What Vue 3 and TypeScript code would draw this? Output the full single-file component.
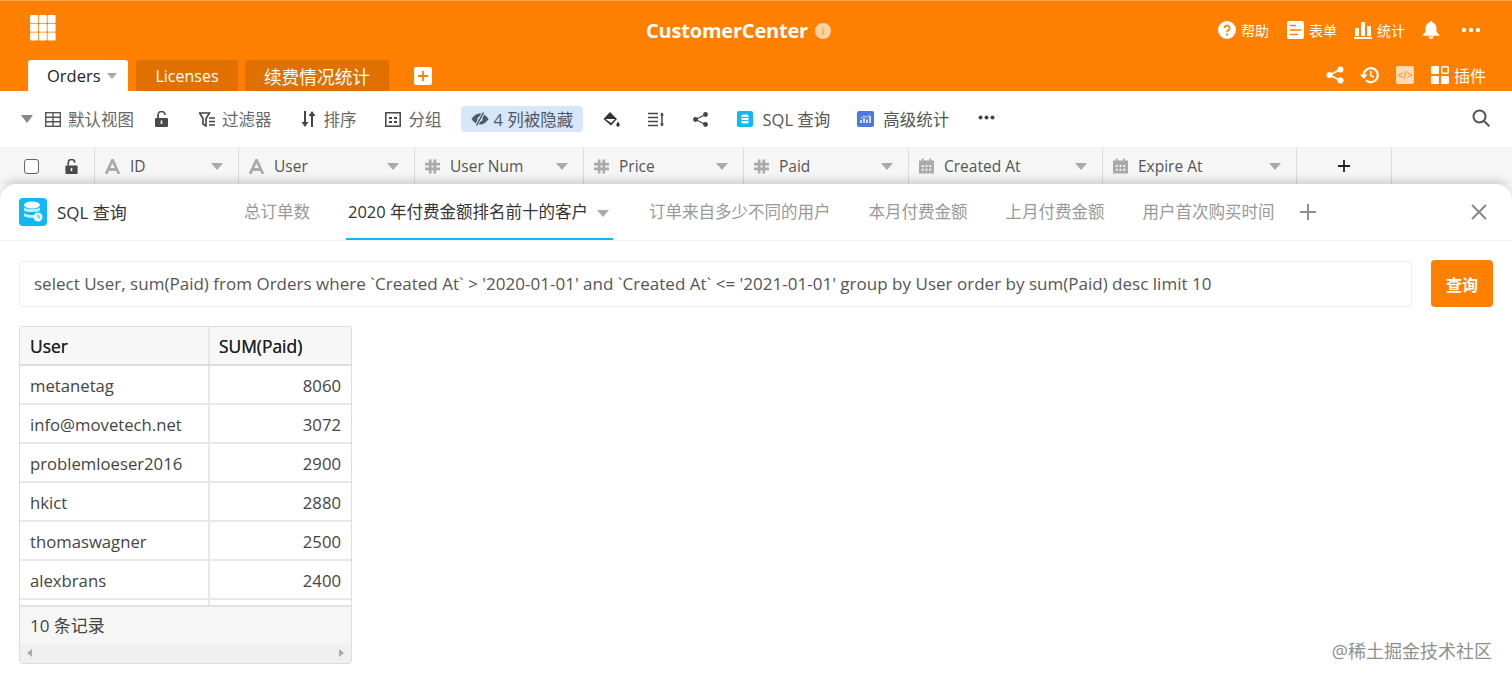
<script setup lang="ts">
interface Column {
  name: string;
  width: number;
  icon: 'text' | 'num' | 'date';
}

const columns: Column[] = [
  { name: 'ID', width: 144, icon: 'text' },
  { name: 'User', width: 176, icon: 'text' },
  { name: 'User Num', width: 169, icon: 'num' },
  { name: 'Price', width: 160, icon: 'num' },
  { name: 'Paid', width: 165, icon: 'num' },
  { name: 'Created At', width: 194, icon: 'date' },
  { name: 'Expire At', width: 194, icon: 'date' },
];

const panelTabs = ['订单来自多少不同的用户', '本月付费金额', '上月付费金额', '用户首次购买时间'];

const rows: [string, number][] = [
  ['metanetag', 8060],
  ['info@movetech.net', 3072],
  ['problemloeser2016', 2900],
  ['hkict', 2880],
  ['thomaswagner', 2500],
  ['alexbrans', 2400],
];

const query =
  "select User, sum(Paid) from Orders where `Created At` > '2020-01-01' and `Created At` <= '2021-01-01' group by User order by sum(Paid) desc limit 10";
</script>

<template>
  <div class="page">
    <header class="top">
      <div class="top-row">
        <svg class="apps" width="26" height="26" viewBox="0 0 26 26" fill="#fff">
          <rect v-for="n in 9" :key="n" :x="((n - 1) % 3) * 8.8" :y="Math.floor((n - 1) / 3) * 8.8" width="8" height="8" rx="1" />
        </svg>
        <div class="title">
          <span>CustomerCenter</span>
          <span class="info">i</span>
        </div>
        <div class="top-actions">
          <span class="top-act help">
            <svg width="18" height="18" viewBox="0 0 18 18"><circle cx="9" cy="9" r="9" fill="#fff" /><path d="M6.4 7a2.6 2.6 0 1 1 4 2.2c-.9.6-1.4 1-1.4 2" fill="none" stroke="#ff8000" stroke-width="1.7" /><circle cx="9" cy="13.6" r="1.1" fill="#ff8000" /></svg>
            帮助
          </span>
          <span class="top-act form">
            <svg width="17" height="18" viewBox="0 0 17 18"><rect width="17" height="18" rx="2" fill="#fff" /><path d="M3 4.5h6M3 9h11M3 13.5h8" stroke="#ff8000" stroke-width="1.6" /></svg>
            表单
          </span>
          <span class="top-act stats">
            <svg width="18" height="18" viewBox="0 0 18 18" fill="#fff"><rect x="1" y="7" width="4" height="8" /><rect x="7" y="1" width="4" height="14" /><rect x="13" y="5" width="4" height="10" /><rect y="16" width="18" height="2" /></svg>
            统计
          </span>
          <svg class="bell" width="18" height="18" viewBox="0 0 18 18" fill="#fff"><path d="M9 0a1.4 1.4 0 0 1 1.4 1.5C13 2.2 14.5 4.5 14.5 7.5V11l2.8 2.800v.9H.7v-.9L3.500 11V7.500C3.500 4.500 5 2.200 7.600 1.500A1.400 1.400 0 0 1 9 0zM6.500 15.500h5a2.500 2.500 0 0 1-5 0z" /></svg>
          <svg class="dots" width="20" height="6" viewBox="0 0 20 6" fill="#fff"><circle cx="3" cy="3" r="2.2" /><circle cx="10" cy="3" r="2.2" /><circle cx="17" cy="3" r="2.2" /></svg>
        </div>
      </div>
      <div class="tab-row">
        <div class="tab active">Orders <i class="caret grey"></i></div>
        <div class="tab licenses">Licenses</div>
        <div class="tab renew">续费情况统计</div>
        <span class="tab-add">
          <svg width="18" height="18" viewBox="0 0 18 18"><rect width="18" height="18" rx="2" fill="#fff" /><path d="M9 4v10M4 9h10" stroke="#ff8000" stroke-width="1.8" /></svg>
        </span>
        <div class="tab-tools">
          <svg class="t-share" width="18" height="18" viewBox="0 0 18 18" fill="#fff"><circle cx="3.5" cy="9" r="3" /><circle cx="14.500" cy="3.500" r="3" /><circle cx="14.500" cy="14.500" r="3" /><path d="M3.500 9l11-5.500M3.500 9l11 5.500" stroke="#fff" stroke-width="1.4" /></svg>
          <svg class="hist" width="20" height="18" viewBox="0 0 20 18"><path d="M3.800 9a7 7 0 1 1 2.200 5.200" fill="none" stroke="#fff" stroke-width="2.2" /><path d="M0 8.500h7.500L3.800 13z" fill="#fff" /><path d="M10.800 5v4.500l3 1.800" fill="none" stroke="#fff" stroke-width="1.8" /></svg>
          <span class="code">&lt;/&gt;</span>
          <span class="plugin">
            <svg width="18" height="18" viewBox="0 0 18 18" fill="#fff"><rect width="8" height="8" rx="1" /><rect x="10.750" y=".75" width="6.500" height="6.500" rx="1" fill="none" stroke="#fff" stroke-width="1.5" /><rect y="10" width="8" height="8" rx="1" /><rect x="10" y="10" width="8" height="8" rx="1" /></svg>
            插件
          </span>
        </div>
      </div>
    </header>

    <div class="toolbar">
      <i class="caret big"></i>
      <span class="tool view">
        <svg width="16" height="15" viewBox="0 0 16 15" fill="none" stroke="#555" stroke-width="1.4"><rect x=".7" y=".7" width="14.600" height="13.600" /><path d="M.7 5.300h14.600M.7 9.800h14.600M8 .7v13.600" /></svg>
        默认视图
      </span>
      <svg class="lock" width="13" height="16" viewBox="0 0 13 16"><path d="M3 7V4a3.500 3.500 0 0 1 7 0" fill="none" stroke="#4a4a4a" stroke-width="1.7" /><rect y="7" width="13" height="9" rx="1" fill="#4a4a4a" /><rect x="5.700" y="9.500" width="1.600" height="3.500" fill="#fff" /></svg>
      <span class="tool filter">
        <svg width="17" height="15" viewBox="0 0 17 15"><path d="M.5 1h10L7 6.500V14L4 12V6.500z" fill="none" stroke="#444" stroke-width="1.6" /><path d="M10 6h6M10 9.500h6M10 13h6" stroke="#444" stroke-width="1.6" /></svg>
        过滤器
      </span>
      <span class="tool sort">
        <svg width="15" height="16" viewBox="0 0 15 16" fill="#444"><path d="M3 0h2v11h2.500L4 16 .5 11H3zM10 16h2V5h2.500L11 0 7.500 5H10z" /></svg>
        排序
      </span>
      <span class="tool group">
        <svg width="16" height="15" viewBox="0 0 16 15"><rect x=".8" y=".8" width="14.400" height="13.400" fill="none" stroke="#444" stroke-width="1.5" /><path d="M4 5h3v2H4zM9 5h3v2H9zM4 9h3v2H4zM9 9h3v2H9z" fill="#444" /></svg>
        分组
      </span>
      <span class="pill">
        <svg width="18" height="14" viewBox="0 0 18 14"><path d="M.5 7C2.500 3.500 5.500 1.500 9 1.500s6.500 2 8.500 5.500c-2 3.500-5 5.500-8.500 5.500S2.500 10.500.5 7z" fill="#4a5a70" /><circle cx="9" cy="7" r="2.500" fill="#d8e6fa" /><path d="M13 0L5 14" stroke="#d8e6fa" stroke-width="3.2" /><path d="M12.500 .5L5.500 13.500" stroke="#4a5a70" stroke-width="1.5" /></svg>
        4 列被隐藏
      </span>
      <svg class="paint" width="18" height="17" viewBox="0 0 18 17" fill="#333"><path d="M8 1l7 7-6 6.500L1.500 8z" /><path d="M3.500 8h9.500L9 12z" fill="#fff" /><path d="M16 10.500c1 1.500 1.700 2.500 1.700 3.500a1.700 1.700 0 0 1-3.400 0c0-1 .7-2 1.700-3.500z" /></svg>
      <svg class="height" width="16" height="15" viewBox="0 0 16 15" stroke="#444" stroke-width="1.5"><path d="M0 1.500h10M0 5.500h10M0 9.500h10M0 13.500h10M14 1v13" /><path d="M12 3.500L14 .5l2 3zM12 11.500l2 3 2-3z" fill="#444" stroke="none" /></svg>
      <svg class="share" width="15" height="15" viewBox="0 0 15 15" fill="#444"><circle cx="2.500" cy="7.500" r="2.400" /><circle cx="12.500" cy="2.500" r="2.400" /><circle cx="12.500" cy="12.500" r="2.400" /><path d="M2.500 7.500l10-5M2.500 7.500l10 5" stroke="#444" stroke-width="1.2" /></svg>
      <span class="tool sql">
        <svg width="16" height="16" viewBox="0 0 16 16"><rect width="16" height="16" rx="2" fill="#11b8f5" /><rect x="4.500" y="3.500" width="7" height="9" rx="1.500" fill="#fff" /><path d="M4.500 6.500h7M4.500 9.500h7" stroke="#11b8f5" /></svg>
        SQL 查询
      </span>
      <span class="tool adv">
        <svg width="17" height="16" viewBox="0 0 17 16"><rect width="17" height="16" rx="2" fill="#4d77e0" /><path d="M4 12V9M7 12V7M10 12V8.500M13 12V5" stroke="#fff" stroke-width="1.5" /><path d="M3.500 7.500L7 5l3 1.500L13 3.500" stroke="#fff" fill="none" stroke-width=".8" /></svg>
        高级统计
      </span>
      <svg class="more" width="17" height="5" viewBox="0 0 17 5" fill="#444"><circle cx="2.500" cy="2.500" r="2" /><circle cx="8.500" cy="2.500" r="2" /><circle cx="14.500" cy="2.500" r="2" /></svg>
      <svg class="search" width="18" height="18" viewBox="0 0 18 18" fill="none" stroke="#555" stroke-width="2"><circle cx="7.500" cy="7.500" r="6" /><path d="M12 12l5.300 5.300" /></svg>
    </div>

    <div class="col-head">
      <div class="col-first">
        <span class="check"></span>
        <svg width="13" height="15" viewBox="0 0 13 16"><path d="M3 7V4a3.500 3.500 0 0 1 7 0" fill="none" stroke="#4a4a4a" stroke-width="1.7" /><rect y="7" width="13" height="9" rx="1" fill="#4a4a4a" /><rect x="5.700" y="9.500" width="1.600" height="3.500" fill="#fff" /></svg>
      </div>
      <div v-for="col in columns" :key="col.name" class="col" :style="{ width: col.width + 'px' }">
        <svg v-if="col.icon === 'text'" width="15" height="15" viewBox="0 0 15 15" fill="none" stroke="#aaa" stroke-width="2.8"><path d="M1 15L7.500 1 14 15M3.500 10.500h8" /></svg>
        <svg v-else-if="col.icon === 'num'" width="15" height="15" viewBox="0 0 16 15" fill="none" stroke="#aaa" stroke-width="2.9"><path d="M5.500 0v15M10.500 0v15M0 5h16M0 10h16" /></svg>
        <svg v-else width="15" height="16" viewBox="0 0 16 16" fill="#aaa"><path d="M0 2h3V0h2v2h6V0h2v2h3v14H0z" /><path d="M3 7h2v2H3zM7 7h2v2H7zM11 7h2v2h-2zM3 11h2v2H3zM7 11h2v2H7zM11 11h2v2h-2z" fill="#f5f5f5" /></svg>
        <span class="col-name">{{ col.name }}</span>
        <i class="caret grey"></i>
      </div>
      <div class="col-add">
        <svg width="14" height="14" viewBox="0 0 14 14" stroke="#222" stroke-width="1.8"><path d="M7 1v12M1 7h12" /></svg>
      </div>
    </div>

    <section class="panel">
      <div class="panel-head">
        <span class="panel-logo">
          <svg width="20" height="22" viewBox="0 0 20 22"><ellipse cx="9" cy="4" rx="8" ry="3.500" fill="#fff" /><path d="M1 6.500c2 2 14 2 16 0v3c-2 2-14 2-16 0zM1 12c2 2 8 2 10 2v3c-4 0-8-.5-10-2z" fill="#fff" opacity=".75" /><circle cx="15" cy="16" r="4.500" fill="#fff" opacity=".9" /><path d="M15 13.500V16l2 1" stroke="#11b8f5" fill="none" /></svg>
        </span>
        <span class="panel-title">SQL 查询</span>
        <span class="ptab first">总订单数</span>
        <span class="ptab current">2020 年付费金额排名前十的客户 <i class="caret grey"></i></span>
        <span v-for="t in panelTabs" :key="t" class="ptab">{{ t }}</span>
        <svg class="padd" width="16" height="16" viewBox="0 0 16 16" stroke="#8e8e8e" stroke-width="2"><path d="M8 0v16M0 8h16" /></svg>
        <svg class="pclose" width="16" height="16" viewBox="0 0 16 16" stroke="#888" stroke-width="2"><path d="M1 1l14 14M15 1L1 15" /></svg>
      </div>

      <div class="panel-body">
        <div class="query-row">
          <div class="query">{{ query }}</div>
          <button class="run">查询</button>
        </div>

        <div class="result">
          <div class="r-head">
            <div class="c1">User</div>
            <div class="c2">SUM(Paid)</div>
          </div>
          <div v-for="r in rows" :key="r[0]" class="r-row">
            <div class="c1">{{ r[0] }}</div>
            <div class="c2 num">{{ r[1] }}</div>
          </div>
          <div class="r-cut"><div class="c1"></div><div class="c2"></div></div>
          <div class="r-foot">10 条记录</div>
          <div class="r-scroll"><i class="arrow left"></i><i class="arrow right"></i></div>
        </div>
      </div>
      <div class="watermark">@稀土掘金技术社区</div>
    </section>
  </div>
</template>

<style>
html,
body {
  margin: 0;
  background: #fff;
  overflow: hidden;
}
</style>

<style scoped>
.page {
  width: 1512px;
  height: 682px;
  overflow: hidden;
  display: flex;
  flex-direction: column;
  font-family: "Open Sans", "Noto Sans CJK SC", sans-serif;
  font-size: 16.5px;
  color: #333;
}

.caret {
  display: inline-block;
  width: 0;
  height: 0;
  border-left: 6px solid transparent;
  border-right: 6px solid transparent;
  border-top: 7px solid #aaa;
}

.top {
  height: 91px;
  background: #ff8000;
  box-shadow: inset 0 1px #ffa64d;
  color: #fff;
  display: flex;
  flex-direction: column;
  flex: none;
}

.top-row {
  height: 60px;
  display: flex;
  align-items: center;
  position: relative;
  padding-left: 30px;
}

.apps {
  margin-top: -4px;
}

.title {
  position: absolute;
  left: 646px;
  top: 17px;
  display: flex;
  align-items: center;
  gap: 7px;
  font-size: 20px;
  font-weight: 700;
  line-height: 28px;
  letter-spacing: -0.2px;
}

.info {
  width: 16px;
  height: 16px;
  border-radius: 50%;
  background: #ffd3a6;
  color: #ff8000;
  font-size: 10px;
  line-height: 16px;
  text-align: center;
  font-weight: 400;
}

.top-actions {
  margin-left: auto;
  padding-right: 31px;
  display: flex;
  align-items: center;
  font-size: 14px;
  height: 20px;
}

.top-act {
  display: flex;
  align-items: center;
  gap: 5px;
}

.form {
  margin-left: 18px;
}

.stats {
  margin-left: 17px;
}

.bell {
  margin-left: 17px;
}

.dots {
  margin-left: 21px;
}

.tab-row {
  height: 31px;
  display: flex;
  align-items: flex-start;
  padding-left: 28px;
}

.tab {
  height: 31px;
  border-radius: 3px 3px 0 0;
  display: flex;
  align-items: center;
  justify-content: center;
  background: #e07000;
  color: #fff;
  box-sizing: border-box;
  font-size: 16px;
}

.tab.active {
  width: 100px;
  background: #fff;
  color: #222;
  gap: 6px;
  padding-left: 19px;
  justify-content: flex-start;
  font-size: 16.5px;
}

.tab.active .caret {
  border-left-width: 5px;
  border-right-width: 5px;
  border-top-width: 6px;
}

.licenses {
  width: 102px;
  margin-left: 8px;
}

.renew {
  width: 144px;
  margin-left: 7px;
  font-size: 17.7px;
}

.tab-add {
  width: 18px;
  height: 18px;
  margin: 7px 0 0 25px;
  display: flex;
}

.tab-tools {
  margin-left: auto;
  padding-right: 26px;
  height: 30px;
  display: flex;
  align-items: center;
  font-size: 16px;
}

.hist {
  margin-left: 16px;
}

.code {
  width: 18px;
  height: 18px;
  margin-left: 16px;
  background: #ffdcb8;
  border-radius: 2px;
  color: #ff8000;
  font-size: 10px;
  line-height: 18px;
  text-align: center;
}

.plugin {
  margin-left: 17px;
  display: flex;
  align-items: center;
  gap: 5px;
}

.toolbar {
  height: 56px;
  flex: none;
  display: flex;
  align-items: center;
  padding-left: 21px;
  color: #666;
  background: #fff;
}

.caret.big {
  border-left-width: 6.5px;
  border-right-width: 6.5px;
  border-top-width: 8px;
  border-top-color: #888;
}

.tool {
  display: flex;
  align-items: center;
  gap: 7px;
  white-space: nowrap;
}

.view {
  margin-left: 12px;
}

.lock {
  margin-left: 21px;
}

.filter {
  margin-left: 31px;
  gap: 6px;
}

.sort {
  margin-left: 29px;
  gap: 8px;
}

.group {
  margin-left: 28px;
  gap: 8px;
}

.pill {
  margin-left: 19px;
  width: 122px;
  height: 26px;
  box-sizing: border-box;
  padding-left: 10px;
  background: #d8e6fa;
  border-radius: 4px;
  display: flex;
  align-items: center;
  gap: 5px;
  color: #4a5a70;
  white-space: nowrap;
}

.paint {
  margin-left: 19px;
}

.height {
  margin-left: 28px;
}

.share {
  margin-left: 29px;
}

.sql {
  margin-left: 29px;
  gap: 10px;
  color: #555;
}

.adv {
  margin-left: 27px;
  gap: 9px;
  color: #555;
}

.more {
  margin-left: 29px;
  margin-top: -3px;
}

.search {
  margin-left: auto;
  margin-right: 22px;
  margin-top: -3px;
}

.col-head {
  height: 37px;
  flex: none;
  display: flex;
  background: #f6f6f6;
  border-top: 1px solid #eee;
  box-sizing: border-box;
  color: #555;
  font-size: 15.5px;
}

.col-first {
  width: 95px;
  box-sizing: border-box;
  border-right: 1px solid #dcdcdc;
  padding-left: 24px;
  display: flex;
  align-items: center;
  gap: 26px;
}

.check {
  width: 13px;
  height: 13px;
  border: 1px solid #666;
  border-radius: 3px;
  background: #fff;
}

.col {
  display: flex;
  align-items: center;
  gap: 10px;
  padding: 0 15px 0 10px;
  box-sizing: border-box;
  border-right: 1px solid #dcdcdc;
}

.col-name {
  flex: 1;
}

.col-add {
  width: 95px;
  display: flex;
  align-items: center;
  justify-content: center;
  box-sizing: border-box;
  border-right: 1px solid #dcdcdc;
}

.panel {
  flex: 1;
  position: relative;
  z-index: 1;
  background: #fff;
  border-radius: 16px 16px 0 0;
  box-shadow: 0 -3px 10px rgba(0, 0, 0, 0.18);
}

.panel-head {
  height: 56px;
  display: flex;
  align-items: center;
  padding-left: 19px;
  border-bottom: 1px solid #f0f0f0;
}

.panel-logo {
  width: 28px;
  height: 28px;
  border-radius: 4px;
  background: #11b8f5;
  display: flex;
  align-items: center;
  justify-content: center;
  flex: none;
}

.panel-title {
  margin-left: 10px;
  width: 187px;
  flex: none;
  color: #333;
  font-size: 17px;
  margin-top: -2px;
}

.ptab {
  margin-left: 38px;
  height: 56px;
  line-height: 56px;
  color: #999;
  white-space: nowrap;
}

.ptab.first {
  margin-left: 0;
}

.ptab.current {
  box-sizing: border-box;
  width: 267px;
  padding-left: 2px;
  color: #333;
  border-bottom: 2px solid #11b8f5;
  margin-left: 36px;
  margin-right: -2px;
}

.ptab.current .caret {
  margin-left: 5px;
  vertical-align: 1px;
}

.padd {
  margin-left: 25px;
}

.pclose {
  margin-left: auto;
  margin-right: 25px;
}

.panel-body {
  padding: 19px 19px 0;
}

.query-row {
  display: flex;
  align-items: center;
  gap: 19px;
}

.query {
  flex: 1;
  height: 46px;
  box-sizing: border-box;
  padding-left: 14px;
  line-height: 44px;
  border: 1px solid #eee;
  border-radius: 3px;
  color: #555;
  white-space: nowrap;
  overflow: hidden;
  font-size: 17px;
  letter-spacing: 0.014px;
}

.run {
  width: 62px;
  height: 47px;
  border: none;
  border-radius: 4px;
  background: #ff8000;
  color: #fff;
  font-family: inherit;
  font-size: 16px;
  font-weight: 700;
  padding: 0;
}

.result {
  margin-top: 19px;
  width: 333px;
  height: 338px;
  box-sizing: border-box;
  border: 1px solid #ddd;
  border-radius: 3px;
  display: flex;
  flex-direction: column;
  overflow: hidden;
  font-size: 16.7px;
}

.r-head,
.r-row,
.r-cut {
  display: flex;
  flex: none;
  border-bottom: 2px solid #e8e8e8;
  box-sizing: border-box;
}

.r-head {
  height: 39px;
  background: #f7f7f7;
  color: #222;
  line-height: 38px;
  border-bottom-color: #ddd;
  font-size: 17.4px;
  text-shadow: 0 0 0.5px #222;
}

.r-row {
  height: 39px;
  line-height: 39px;
  color: #444;
}

.r-cut {
  height: 5px;
  border-bottom: none;
}

.c1 {
  width: 190px;
  box-sizing: border-box;
  padding-left: 10px;
  border-right: 2px solid #e8e8e8;
  white-space: nowrap;
}

.c2 {
  flex: 1;
  padding-left: 9px;
}

.c2.num {
  padding: 0 10px 0 0;
  text-align: right;
}

.r-foot {
  height: 38px;
  flex: none;
  background: #f6f6f6;
  border-top: 2px solid #e2e2e2;
  box-sizing: border-box;
  padding-left: 10px;
  line-height: 38px;
  color: #444;
  font-size: 17px;
}

.r-scroll {
  flex: 1;
  background: #f0f0f0;
  display: flex;
  align-items: center;
  justify-content: space-between;
  padding: 0 7px;
}

.arrow {
  width: 0;
  height: 0;
  border-top: 4.5px solid transparent;
  border-bottom: 4.5px solid transparent;
}

.arrow.left {
  border-right: 5px solid #aaa;
}

.arrow.right {
  border-left: 5px solid #aaa;
}

.watermark {
  position: absolute;
  right: 20px;
  top: 455px;
  color: #8f8f8f;
  font-size: 18px;
  line-height: 24px;
  white-space: nowrap;
}
</style>
